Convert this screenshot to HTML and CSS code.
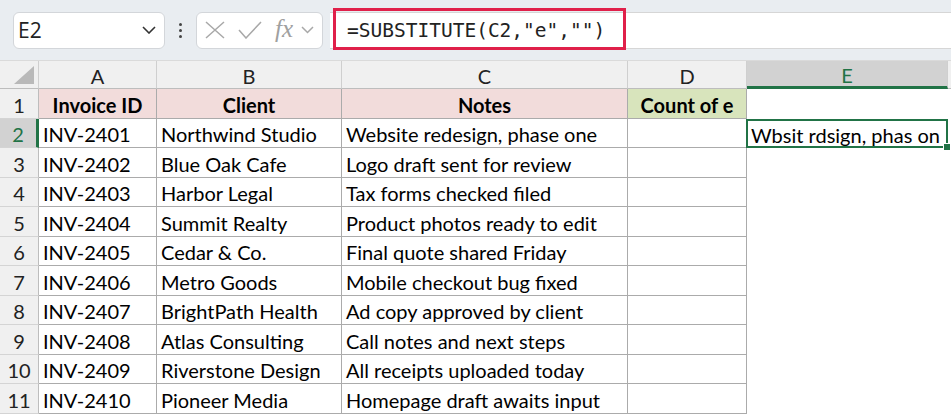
FILE: index.html
```html
<!DOCTYPE html>
<html lang="en">
<head>
    <meta charset="UTF-8">
    <meta name="viewport" content="width=device-width, initial-scale=1.0">
    <title>SUBSTITUTE</title>
    <link rel="stylesheet" href="styles.css">
</head>
<body>
<div class="toolbar">
    <div class="name-box">
        <span>E2</span>
        <svg class="chev" width="14" height="8" viewBox="0 0 14 8"><path d="M1 1l6 6 6-6" fill="none" stroke="#333" stroke-width="1.6"/></svg>
    </div>
    <div class="dots"><i></i><i></i><i></i></div>
    <div class="fx-box">
        <svg width="20" height="18" viewBox="0 0 20 18"><path d="M1 1l18 16M19 1L1 17" fill="none" stroke="#a8a8a8" stroke-width="1.5"/></svg>
        <svg width="24" height="18" viewBox="0 0 24 18"><path d="M1 9l7 8L23 1" fill="none" stroke="#a8a8a8" stroke-width="1.5"/></svg>
        <span class="fx">fx</span>
        <svg width="13" height="8" viewBox="0 0 13 8"><path d="M1 1l5.5 5.5L12 1" fill="none" stroke="#a8a8a8" stroke-width="1.5"/></svg>
    </div>
    <div class="formula">
        <span>=SUBSTITUTE(C2,"e","")</span>
        <div class="mark"></div>
    </div>
</div>

<div class="sheet">
    <div class="hd corner"><div class="tri"></div></div>
    <div class="hd">A</div>
    <div class="hd">B</div>
    <div class="hd">C</div>
    <div class="hd">D</div>
    <div class="hd active-col">E</div>
    <div class="hd"></div>

    <div class="rh">1</div>
    <div class="c title pink">Invoice ID</div>
    <div class="c title pink">Client</div>
    <div class="c title pink">Notes</div>
    <div class="c title green">Count of e</div>
    <div class="e"></div>
    <div class="e"></div>

    <div class="rh active-row">2</div>
    <div class="c">INV-2401</div>
    <div class="c">Northwind Studio</div>
    <div class="c">Website redesign, phase one</div>
    <div class="c"></div>
    <div class="e sel">Wbsit rdsign, phas on</div>
    <div class="e"></div>

    <div class="rh">3</div>
    <div class="c">INV-2402</div>
    <div class="c">Blue Oak Cafe</div>
    <div class="c">Logo draft sent for review</div>
    <div class="c"></div>
    <div class="e"></div>
    <div class="e"></div>

    <div class="rh">4</div>
    <div class="c">INV-2403</div>
    <div class="c">Harbor Legal</div>
    <div class="c">Tax forms checked filed</div>
    <div class="c"></div>
    <div class="e"></div>
    <div class="e"></div>

    <div class="rh">5</div>
    <div class="c">INV-2404</div>
    <div class="c">Summit Realty</div>
    <div class="c">Product photos ready to edit</div>
    <div class="c"></div>
    <div class="e"></div>
    <div class="e"></div>

    <div class="rh">6</div>
    <div class="c">INV-2405</div>
    <div class="c">Cedar &amp; Co.</div>
    <div class="c">Final quote shared Friday</div>
    <div class="c"></div>
    <div class="e"></div>
    <div class="e"></div>

    <div class="rh">7</div>
    <div class="c">INV-2406</div>
    <div class="c">Metro Goods</div>
    <div class="c">Mobile checkout bug fixed</div>
    <div class="c"></div>
    <div class="e"></div>
    <div class="e"></div>

    <div class="rh">8</div>
    <div class="c">INV-2407</div>
    <div class="c">BrightPath Health</div>
    <div class="c">Ad copy approved by client</div>
    <div class="c"></div>
    <div class="e"></div>
    <div class="e"></div>

    <div class="rh">9</div>
    <div class="c">INV-2408</div>
    <div class="c">Atlas Consulting</div>
    <div class="c">Call notes and next steps</div>
    <div class="c"></div>
    <div class="e"></div>
    <div class="e"></div>

    <div class="rh">10</div>
    <div class="c">INV-2409</div>
    <div class="c">Riverstone Design</div>
    <div class="c">All receipts uploaded today</div>
    <div class="c"></div>
    <div class="e"></div>
    <div class="e"></div>

    <div class="rh">11</div>
    <div class="c">INV-2410</div>
    <div class="c">Pioneer Media</div>
    <div class="c">Homepage draft awaits input</div>
    <div class="c"></div>
    <div class="e"></div>
    <div class="e"></div>
</div>
</body>
</html>
```

FILE: styles.css
```css
body {
    margin: 0;
    font-family: Lato, "Liberation Sans", sans-serif;
    background: #fff;
    overflow: hidden;
}

/* formula bar */
.toolbar {
    height: 61px;
    box-sizing: border-box;
    background: #e9edf1;
    display: flex;
    align-items: center;
    padding-left: 13px;
    border-bottom: 1px solid #dadada;
}

.name-box {
    width: 152px;
    height: 37px;
    box-sizing: border-box;
    background: #fff;
    border: 1px solid #d3d6da;
    border-radius: 6px;
    display: flex;
    align-items: center;
    justify-content: space-between;
    padding: 0 8px 0 4px;
    font-family: "Open Sans", "Liberation Sans", sans-serif;
    font-size: 21px;
    color: #222;
}

.dots {
    width: 31px;
    display: flex;
    flex-direction: column;
    align-items: center;
    gap: 3px;
}

.dots i {
    width: 3px;
    height: 3px;
    background: #444;
    border-radius: 50%;
}

.fx-box {
    width: 127px;
    height: 37px;
    box-sizing: border-box;
    background: #fff;
    border: 1px solid #d3d6da;
    border-radius: 6px;
    display: flex;
    align-items: center;
    padding-left: 8px;
    gap: 13px;
}

.fx-box .fx {
    font-family: "Liberation Serif", serif;
    font-style: italic;
    font-size: 25px;
    color: #a0a0a0;
    margin-right: -5px;
    margin-top: -3px;
}

.formula {
    position: relative;
    margin-left: 7px;
    flex: 1;
    height: 37px;
    box-sizing: border-box;
    background: #fff;
    border-top: 1px solid #d6d6d6;
    border-bottom: 1px solid #d6d6d6;
    display: flex;
    align-items: center;
    padding-left: 17px;
    font-family: "DejaVu Sans Mono", "Liberation Mono", monospace;
    font-size: 19.5px;
    color: #222;
}

.mark {
    position: absolute;
    left: 3px;
    top: -5px;
    width: 293px;
    height: 42px;
    box-sizing: border-box;
    border: 3px solid #e0204a;
}

/* grid */
.sheet {
    display: grid;
    grid-template-columns: 39px 118px 185px 286px 119px 201px 1fr;
    grid-template-rows: 28px repeat(11, 29.5px);
    font-size: 20px;
    color: #000;
}

.hd {
    background: #f0f0f0;
    border-right: 1px solid #cfcfcf;
    border-bottom: 1px solid #bdbdbd;
    display: flex;
    align-items: center;
    justify-content: center;
    padding-top: 2px;
    color: #222;
}

.corner {
    position: relative;
}

.tri {
    position: absolute;
    right: 4px;
    bottom: 4px;
    width: 20px;
    height: 18px;
    background: #b9b9b9;
    clip-path: polygon(100% 0, 100% 100%, 0 100%);
}

.active-col {
    background: #d2d2d2;
    color: #217346;
    border-bottom: 3px solid #217346;
}

.rh {
    background: #f0f0f0;
    border-right: 1px solid #bdbdbd;
    border-bottom: 1px solid #d4d4d4;
    display: flex;
    align-items: center;
    justify-content: center;
    padding-top: 3px;
    color: #222;
}

.active-row {
    background: #d2d2d2;
    color: #217346;
    border-right: 3px solid #217346;
}

.c {
    border-right: 1px solid #ababab;
    border-bottom: 1px solid #ababab;
    display: flex;
    align-items: center;
    padding: 3px 0 0 4px;
    white-space: nowrap;
    overflow: hidden;
}

.title {
    font-weight: bold;
    justify-content: center;
    padding-left: 0;
}

.pink {
    background: #f2dcdb;
}

.green {
    background: #d8e4bc;
}

.e {
    display: flex;
    align-items: center;
    padding: 3px 0 0 4px;
    white-space: nowrap;
}

.sel {
    position: relative;
}

.sel::after {
    content: "";
    position: absolute;
    left: -1px;
    top: 0;
    right: 0;
    bottom: 0;
    border: 2px solid #217346;
}

.sel::before {
    content: "";
    position: absolute;
    right: -3px;
    bottom: -3px;
    width: 6px;
    height: 6px;
    background: #217346;
    border: 1px solid #fff;
    z-index: 1;
}
```
